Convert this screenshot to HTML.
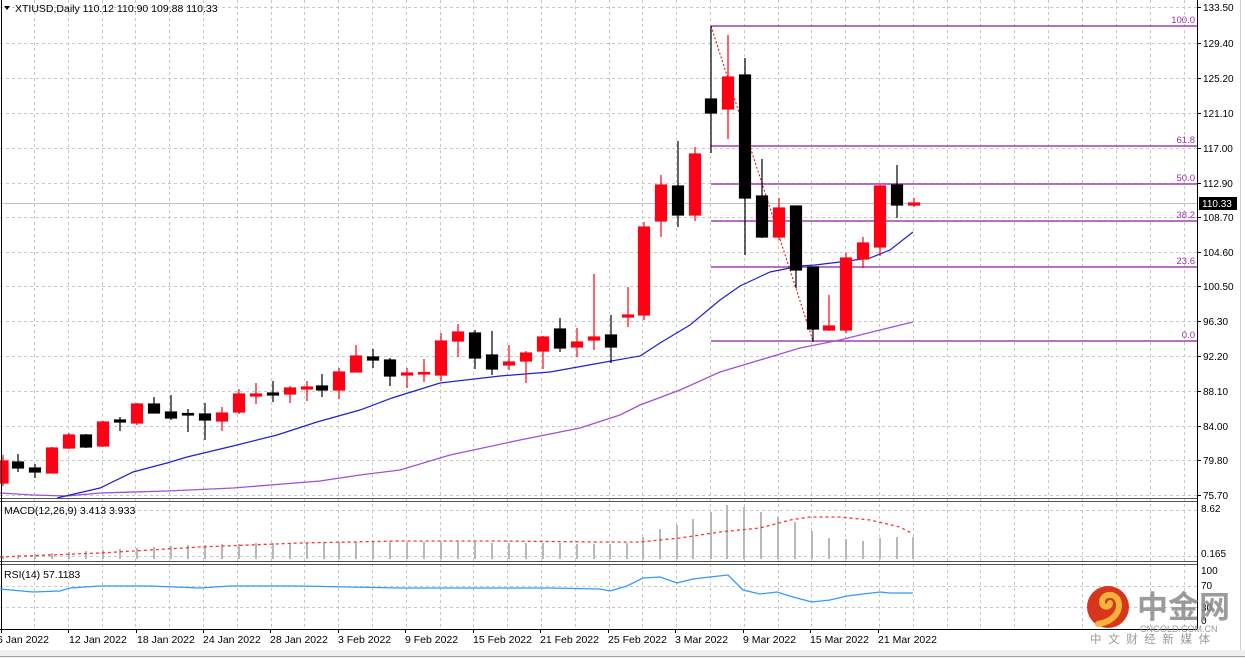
<!DOCTYPE html>
<html><head><meta charset="utf-8"><style>
html,body{margin:0;padding:0;background:#fff;width:1245px;height:658px;overflow:hidden}
svg{display:block}
text{font-family:"Liberation Sans","Noto Sans CJK SC",sans-serif}
</style></head><body>
<svg width="1245" height="658" viewBox="0 0 1245 658" xmlns="http://www.w3.org/2000/svg">
<rect width="1245" height="658" fill="#fff"/>
<!-- grid -->
<g stroke="#c8c8c8" stroke-width="1" stroke-dasharray="3,3" fill="none">
<path d="M0 7.5H1197M0 43.5H1197M0 78.5H1197M0 113.5H1197M0 148.5H1197M0 183.5H1197M0 217.5H1197M0 252.5H1197M0 286.5H1197M0 321.5H1197M0 356.5H1197M0 391.5H1197M0 426.5H1197M0 460.5H1197M0 495.5H1197"/>
<path d="M0 510.5H1197M0 556.5H1197M0 586.5H1197M0 607.5H1197"/>
<path d="M34.5 0V628M68.5 0V628M102.5 0V628M135.5 0V628M169.5 0V628M203.5 0V628M237.5 0V628M271.5 0V628M304.5 0V628M338.5 0V628M372.5 0V628M406.5 0V628M440.5 0V628M473.5 0V628M507.5 0V628M541.5 0V628M575.5 0V628M609.5 0V628M642.5 0V628M676.5 0V628M710.5 0V628M744.5 0V628M778.5 0V628M811.5 0V628M845.5 0V628M879.5 0V628M913.5 0V628M947.5 0V628M980.5 0V628M1014.5 0V628M1048.5 0V628M1082.5 0V628M1116.5 0V628M1150.5 0V628M1184.5 0V628"/>
</g>
<!-- current price line -->
<path d="M0 203.5H1197" stroke="#c0c0c0"/>
<!-- fib -->
<g stroke="#a040b0" stroke-width="1.5">
<path d="M711 26H1197M711 146H1197M711 184H1197M711 221H1197M711 267H1197M711 341H1197"/>
</g>
<g fill="#9a30a8" font-size="9.5" text-anchor="end">
<text x="1195" y="23">100.0</text><text x="1195" y="143">61.8</text><text x="1195" y="181">50.0</text>
<text x="1195" y="218">38.2</text><text x="1195" y="264">23.6</text><text x="1195" y="338">0.0</text>
</g>
<!-- MAs -->
<polyline fill="none" stroke="#a050d8" stroke-width="1.3" points="0,493 33,495 67,496 100,493 167,491 233,488 283,484 320,481 360,475 400,470 450,455 520,440 580,428 620,415 640,405 680,390 720,372 760,360 800,348 840,340 880,330 913,322"/>
<polyline fill="none" stroke="#2020d0" stroke-width="1.2" points="57,498 100,488 133,472 167,463 187,457 233,446 277,435 317,422 360,410 392,398 440,383 500,376 550,372 600,363 640,356 660,343 690,325 720,300 740,286 770,272 800,266 815,265 840,262 870,258 890,250 913,232"/>
<!-- fib connector -->
<path d="M711 26L813 341" stroke="#e00000" stroke-dasharray="2,2" stroke-width="1"/>
<!-- candles -->
<g stroke-width="1.2">
<g stroke="#000" fill="#000">
<path d="M18 454V472M35 464V478M86 434V448M120 417V431M154 397V413M171 395V420M188 409V432M205 403V440M273 381V402M322 374V397M373 349V368M390 358V386M475 330V369M492 331V375M560 318V352M611 315V363M678 141V227M711 26V153M745 58V255M762 159V238M796 206V288M813 267V342M897 165V218"/>
<rect x="12.5" y="462" width="11" height="6"/><rect x="29.5" y="468" width="11" height="4"/><rect x="80.5" y="435" width="11" height="12"/>
<rect x="114.5" y="420" width="11" height="2"/><rect x="148.5" y="404" width="11" height="9"/><rect x="165.5" y="412" width="11" height="6"/>
<rect x="182.5" y="413.5" width="11" height="1.5"/><rect x="199.5" y="414" width="11" height="6"/><rect x="267.5" y="393" width="11" height="2"/>
<rect x="316.5" y="386" width="11" height="4"/><rect x="367.5" y="357" width="11" height="3"/><rect x="384.5" y="360" width="11" height="16"/>
<rect x="469.5" y="333" width="11" height="25"/><rect x="486.5" y="355" width="11" height="14"/><rect x="554.5" y="329" width="11" height="19"/>
<rect x="605.5" y="335" width="11" height="12"/><rect x="672.5" y="186" width="11" height="29"/><rect x="705.5" y="99" width="11" height="14"/>
<rect x="739.5" y="75" width="11" height="123"/><rect x="756.5" y="196" width="11" height="41"/><rect x="790.5" y="206" width="11" height="64"/>
<rect x="807.5" y="267" width="11" height="62"/><rect x="891.5" y="185" width="11" height="20"/>
</g>
<g stroke="#ff0015" fill="#ff0015">
<path d="M3 455V486M52 447V473M69 433V449M103 421V447M137 403V425M222 407V431M239 389V414M256 383V404M290 386V403M307 381V401M339 368V399M356 345V372M407 368V388M424 359V382M441 333V381M458 324V357M509 345V370M526 351V383M543 336V369M577 328V357M594 274V350M628 287V327M644 222V320M661 175V237M695 147V221M728 35V139M779 198V240M829 295V331M846 253V333M863 237V268M880 185V256M914 198V207"/>
<rect x="-3" y="461" width="11" height="22"/><rect x="46.5" y="448" width="11" height="25"/><rect x="63.5" y="435" width="11" height="13"/>
<rect x="97.5" y="422" width="11" height="24"/><rect x="131.5" y="404" width="11" height="19"/><rect x="216.5" y="413" width="11" height="8"/>
<rect x="233.5" y="394" width="11" height="18"/><rect x="250.5" y="394" width="11" height="2"/><rect x="284.5" y="388" width="11" height="6"/>
<rect x="301.5" y="387" width="11" height="2"/><rect x="333.5" y="372" width="11" height="18"/><rect x="350.5" y="356" width="11" height="16"/>
<rect x="401.5" y="373" width="11" height="2"/><rect x="418.5" y="372.5" width="11" height="1.5"/><rect x="435.5" y="341" width="11" height="34"/>
<rect x="452.5" y="332" width="11" height="9"/><rect x="503.5" y="362" width="11" height="3"/><rect x="520.5" y="353" width="11" height="8"/>
<rect x="537.5" y="337" width="11" height="14"/><rect x="571.5" y="342" width="11" height="5"/><rect x="588.5" y="337" width="11" height="3"/>
<rect x="622.5" y="315" width="11" height="2"/><rect x="638.5" y="227" width="11" height="88"/><rect x="655.5" y="185" width="11" height="36"/>
<rect x="689.5" y="154" width="11" height="61"/><rect x="722.5" y="77" width="11" height="32"/><rect x="773.5" y="208" width="11" height="29"/>
<rect x="823.5" y="326" width="11" height="4"/><rect x="840.5" y="258" width="11" height="72"/><rect x="857.5" y="243" width="11" height="16"/>
<rect x="874.5" y="186" width="11" height="61"/><rect x="908.5" y="203" width="11" height="2"/>
</g>
</g>
<!-- panel separators -->
<g stroke="#555" stroke-width="1">
<path d="M0 498.5H1197M0 501.5H1197M0 561.5H1197M0 564.5H1197"/>
</g>
<path d="M1.5 0V629" stroke="#000"/>
<path d="M0 629.5H1197" stroke="#000"/>
<path d="M1197.5 0V629" stroke="#000"/>
<!-- MACD bars -->
<g stroke="#b8b8b8" stroke-width="2">
<path d="M3 559V556M18 559V555M35 559V554M52 559V553M69 559V552M86 559V551M103 559V550M120 559V549M137 559V548M154 559V547M171 559V546M188 559V545M205 559V545M222 559V544M239 559V544M256 559V543M273 559V543M290 559V543M307 559V543M324 559V542M339 559V542M356 559V542M373 559V542M390 559V542M407 559V542M424 559V542M441 559V542M458 559V542M475 559V542M492 559V543M509 559V543M526 559V543M543 559V543M560 559V543M577 559V544M594 559V544M610 559V544M627 559V543M643 559V537M660 559V529M677 559V525M693 559V519M711 559V512M727 559V505M744 559V507M761 559V512M778 559V517M795 559V522M812 559V531M829 559V538M846 559V539M863 559V541M880 559V538M897 559V537M913 559V537"/>
</g>
<polyline fill="none" stroke="#ff3030" stroke-width="1.3" stroke-dasharray="3,3" points="0,557 100,553 200,547 300,543 400,541 500,541 600,542 640,542 680,538 720,532 760,528 790,520 810,517 840,517 870,520 900,527 913,534"/>
<!-- RSI -->
<polyline fill="none" stroke="#3399ff" stroke-width="1.3" points="0,589 33,592 60,591 70,588 100,586 150,586 200,588 230,586 300,586 400,588 500,588 550,588 600,589 610,591 627,586 643,578 660,577 677,583 693,579 710,577 728,575 743,590 760,594 777,592 793,597 812,602 830,600 847,596 863,594 880,592 890,593 913,593"/>
<!-- labels -->
<g font-size="10.5" fill="#000">
<path d="M4 6L10 6L7 10Z" fill="#000"/>
<text x="15" y="12">XTIUSD,Daily  110.12 110.90 109.88 110.33</text>
<text x="4" y="514">MACD(12,26,9) 3.413 3.933</text>
<text x="4" y="578">RSI(14) 57.1183</text>
</g>
<!-- right axis -->
<g font-size="10" fill="#000">
<path d="M1197 7.5h4M1197 43.5h4M1197 78.5h4M1197 113.5h4M1197 148.5h4M1197 183.5h4M1197 217.5h4M1197 252.5h4M1197 286.5h4M1197 321.5h4M1197 356.5h4M1197 391.5h4M1197 426.5h4M1197 460.5h4M1197 495.5h4" stroke="#000"/>
<text x="1203" y="11">133.50</text><text x="1203" y="47">129.40</text><text x="1203" y="82">125.20</text><text x="1203" y="117">121.10</text>
<text x="1203" y="152">117.00</text><text x="1203" y="187">112.90</text><text x="1203" y="221">108.70</text><text x="1203" y="256">104.60</text>
<text x="1203" y="290">100.50</text><text x="1203" y="325">96.30</text><text x="1203" y="360">92.20</text><text x="1203" y="395">88.10</text>
<text x="1203" y="430">84.00</text><text x="1203" y="464">79.80</text><text x="1203" y="499">75.70</text>
<text x="1201" y="512">8.62</text><text x="1201" y="557">0.165</text>
<text x="1201" y="574">100</text><text x="1201" y="589">70</text><text x="1201" y="611">30</text><text x="1201" y="624">0</text>
<rect x="1199" y="197" width="38" height="13" fill="#000"/>
<text x="1202" y="207" fill="#fff">110.33</text>
</g>
<!-- date axis -->
<g stroke="#000"><path d="M1.5 629v4M68.5 629v4M136.5 629v4M203.5 629v4M270.5 629v4M338.5 629v4M405.5 629v4M473.5 629v4M540.5 629v4M608.5 629v4M675.5 629v4M743.5 629v4M810.5 629v4M878.5 629v4"/></g>
<g font-size="10.5" fill="#000">
<text x="-3" y="643">6 Jan 2022</text><text x="69" y="643">12 Jan 2022</text><text x="137" y="643">18 Jan 2022</text>
<text x="203" y="643">24 Jan 2022</text><text x="270" y="643">28 Jan 2022</text><text x="338" y="643">3 Feb 2022</text>
<text x="405" y="643">9 Feb 2022</text><text x="473" y="643">15 Feb 2022</text><text x="540" y="643">21 Feb 2022</text>
<text x="608" y="643">25 Feb 2022</text><text x="675" y="643">3 Mar 2022</text><text x="743" y="643">9 Mar 2022</text>
<text x="810" y="643">15 Mar 2022</text><text x="878" y="643">21 Mar 2022</text>
</g>
<rect x="0" y="650" width="1245" height="8" fill="#f0f0f0"/>
<path d="M0 656.5H1245" stroke="#a0a0a0"/>
<path d="M1240.5 0V650" stroke="#d0d0d0"/>
<!-- watermark -->
<circle cx="1108" cy="607" r="21" fill="#d8361c"/>
<path d="M1098 624C1112 622 1122 612 1118 600C1114 592 1102 594 1102 602C1102 608 1110 608 1110 603" fill="none" stroke="#f6b33a" stroke-width="6" stroke-linecap="round"/>
<text x="1137" y="618" font-size="31" font-weight="bold" fill="#8a8a8a" fill-opacity="0.85">中金网</text>
<text x="1140" y="632" font-size="9" fill="#999">CNGOLD.COM.CN</text>
<text x="1090" y="643" font-size="11.5" fill="#999" letter-spacing="6.6">中文财经新媒体</text>
</svg>
</body></html>
